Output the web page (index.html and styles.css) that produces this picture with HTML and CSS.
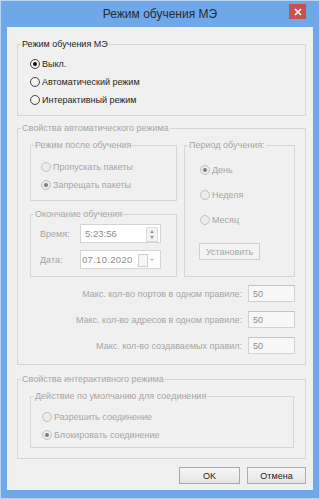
FILE: index.html
```html
<!DOCTYPE html>
<html lang="ru">
<head>
    <meta charset="UTF-8">
    <title>Режим обучения МЭ</title>
    <link rel="stylesheet" href="styles.css">
</head>
<body>
<div class="window">
    <div class="titlebar">
        <span class="title">Режим обучения МЭ</span>
        <span class="close">
            <svg width="8" height="8" viewBox="0 0 8 8"><path d="M1 1L7 7M7 1L1 7" stroke="#fff" stroke-width="1.6"/></svg>
        </span>
    </div>

    <div class="client">
        <fieldset class="group g-mode">
            <legend>Режим обучения МЭ</legend>
            <div class="radio"><span class="circle on"></span>Выкл.</div>
            <div class="radio"><span class="circle"></span>Автоматический режим</div>
            <div class="radio"><span class="circle"></span>Интерактивный режим</div>
        </fieldset>

        <fieldset class="group off g-auto">
            <legend>Свойства автоматического режима</legend>
            <div class="cols">
                <div class="col-left">
                    <fieldset class="group g-after">
                        <legend>Режим после обучения</legend>
                        <div class="radio"><span class="circle"></span>Пропускать пакеты</div>
                        <div class="radio"><span class="circle on"></span>Запрещать пакеты</div>
                    </fieldset>
                    <fieldset class="group g-end">
                        <legend>Окончание обучения</legend>
                        <div class="field-row">
                            <span class="field-label">Время:</span>
                            <span class="field time">5:23:56
                                <span class="spin"><i class="up"></i><i class="down"></i></span>
                            </span>
                        </div>
                        <div class="field-row">
                            <span class="field-label">Дата:</span>
                            <span class="field date">07.10.2020
                                <span class="cal"></span><span class="drop"></span>
                            </span>
                        </div>
                    </fieldset>
                </div>
                <fieldset class="group g-period">
                    <legend>Период обучения:</legend>
                    <div class="radio"><span class="circle on"></span>День</div>
                    <div class="radio"><span class="circle"></span>Неделя</div>
                    <div class="radio"><span class="circle"></span>Месяц</div>
                    <button class="btn small">Установить</button>
                </fieldset>
            </div>
            <div class="limits">
                <div class="limit-row"><span>Макс. кол-во портов в одном правиле:</span><span class="num">50</span></div>
                <div class="limit-row"><span>Макс. кол-во адресов в одном правиле:</span><span class="num">50</span></div>
                <div class="limit-row"><span>Макс. кол-во создаваемых правил:</span><span class="num">50</span></div>
            </div>
        </fieldset>

        <fieldset class="group off g-inter">
            <legend>Свойства интерактивного режима</legend>
            <fieldset class="group g-action">
                <legend>Действие по умолчанию для соединения</legend>
                <div class="radio"><span class="circle"></span>Разрешить соединение</div>
                <div class="radio"><span class="circle on"></span>Блокировать соединение</div>
            </fieldset>
        </fieldset>

        <div class="buttons">
            <button class="btn default">OK</button>
            <button class="btn">Отмена</button>
        </div>
    </div>
</div>
</body>
</html>
```

FILE: styles.css
```css
body {
    margin: 0;
    background: #fff;
    font-family: "Liberation Sans", Arial, sans-serif;
    font-size: 9px;
    color: #1e1e1e;
}

.window {
    box-sizing: border-box;
    width: 320px;
    height: 499px;
    border: 1px solid #b9d3f2;
    background: #6fa8e9;
    padding: 0 6px 8px 6px;
    display: flex;
    flex-direction: column;
}

.titlebar {
    height: 26px;
    display: flex;
    align-items: center;
    justify-content: center;
    position: relative;
}
.title {
    font-size: 12px;
    color: #2b2b2b;
}
.close {
    position: absolute;
    right: 7px;
    top: 3px;
    width: 17px;
    height: 15px;
    background: #c9504e;
    display: flex;
    align-items: center;
    justify-content: center;
}

.client {
    flex: 1;
    background: #f0f0f0;
    padding: 0 7px 0 10px;
    display: flex;
    flex-direction: column;
}

/* group boxes */
.group {
    margin: 0;
    padding: 0;
    min-width: 0;
    border: 1px solid #d6d6d6;
}
.group > legend {
    padding: 0 1px;
    line-height: 13px;
    font-size: 9px;
}
.off, .off legend {
    color: #a6a6a6;
}

.g-mode {
    margin-top: 11px;
    padding: 4px 0 6px 12px;
}
.g-mode > legend {
    margin-left: -9px;
}
.g-auto {
    margin-top: 6px;
    padding: 4px 10px 10px 12px;
}
.g-auto > legend {
    margin-left: -9px;
}
.g-inter {
    margin-top: 8px;
    padding: 4px 11px 10px 12px;
}
.g-inter > legend {
    margin-left: -9px;
}

.cols {
    display: grid;
    grid-template-columns: 147px 1fr;
    gap: 7px;
}
.g-after {
    padding: 6px 0 6px 10px;
}
.g-after > legend {
    margin-left: -7px;
}
.g-end {
    margin-top: 7px;
    padding: 3px 0 7px 9px;
}
.g-end > legend {
    margin-left: -6px;
}
.g-period {
    padding: 9px 0 0 15px;
}
.g-period > legend {
    margin-left: -12px;
}
.g-period .radio {
    margin-bottom: 7px;
}
.g-action {
    padding: 5px 0 3px 11px;
}
.g-action > legend {
    margin-left: -8px;
}

/* radio buttons */
.radio {
    height: 18px;
    display: flex;
    align-items: center;
    white-space: nowrap;
}
.circle {
    box-sizing: border-box;
    width: 10px;
    height: 10px;
    margin-right: 2px;
    border: 1px solid #4a4a4a;
    border-radius: 50%;
    background: radial-gradient(circle at 50% 35%, #fff, #e2e2e2);
    display: flex;
    align-items: center;
    justify-content: center;
}
.circle.on::after {
    content: "";
    width: 4px;
    height: 4px;
    border-radius: 50%;
    background: #111;
}
.off .circle {
    border-color: #c2c2c2;
    background: #ececec;
}
.off .circle.on::after {
    background: #7c7c7c;
}

/* fields */
.field-row {
    display: flex;
    align-items: center;
    height: 19px;
}
.field-row + .field-row {
    margin-top: 7px;
}
.field-label {
    width: 40px;
}
.field {
    box-sizing: border-box;
    width: 81px;
    height: 19px;
    border: 1px solid #d4d4d4;
    background: #fff;
    display: flex;
    align-items: center;
    padding-left: 4px;
    color: #8c8c8c;
    font-size: 9.5px;
    position: relative;
}
.field.date {
    padding-left: 1px;
    letter-spacing: 0.3px;
}
.spin {
    position: absolute;
    right: 2px;
    top: 2px;
    width: 10px;
    height: 13px;
    border: 1px solid #dcdcdc;
    background: #f3f3f3;
    display: flex;
    flex-direction: column;
    align-items: center;
    justify-content: space-around;
}
.spin i {
    width: 0;
    height: 0;
    border-left: 2px solid transparent;
    border-right: 2px solid transparent;
}
.spin .up {
    border-bottom: 3px solid #9a9a9a;
}
.spin .down {
    border-top: 3px solid #9a9a9a;
}
.cal {
    position: absolute;
    right: 12px;
    top: 3px;
    width: 8px;
    height: 11px;
    border: 1px solid #cfcfcf;
    background: #f6f6f6;
}
.drop {
    position: absolute;
    right: 6px;
    top: 8px;
    border-left: 2px solid transparent;
    border-right: 2px solid transparent;
    border-top: 2px solid #b0b0b0;
}

.limits {
    margin-top: 8px;
    display: flex;
    flex-direction: column;
    gap: 9px;
}
.limit-row {
    display: flex;
    justify-content: flex-end;
    align-items: center;
    gap: 6px;
    height: 17px;
}
.num {
    box-sizing: border-box;
    width: 47px;
    height: 17px;
    border: 1px solid #d2d2d2;
    border-top-color: #c4c4c4;
    background: #f7f7f7;
    color: #8e8e8e;
    padding-left: 4px;
    display: flex;
    align-items: center;
}

/* buttons */
.btn {
    font-family: "Liberation Sans", Arial, sans-serif;
    font-size: 9px;
    color: #1e1e1e;
    height: 17px;
    padding: 0;
    border: 1px solid #adadad;
    background: linear-gradient(#f6f6f6, #e4e4e4);
}
.btn.small {
    width: 61px;
    margin-left: -1px;
    margin-top: 7px;
    color: #a6a6a6;
    border-color: #d0d0d0;
    background: #f2f2f2;
}
.btn.default {
    border-color: #7fb3e8;
    width: 61px;
}
.buttons {
    margin-top: 8px;
    display: flex;
    justify-content: flex-end;
    gap: 7px;
}
.buttons .btn:last-child {
    width: 59px;
}
```
